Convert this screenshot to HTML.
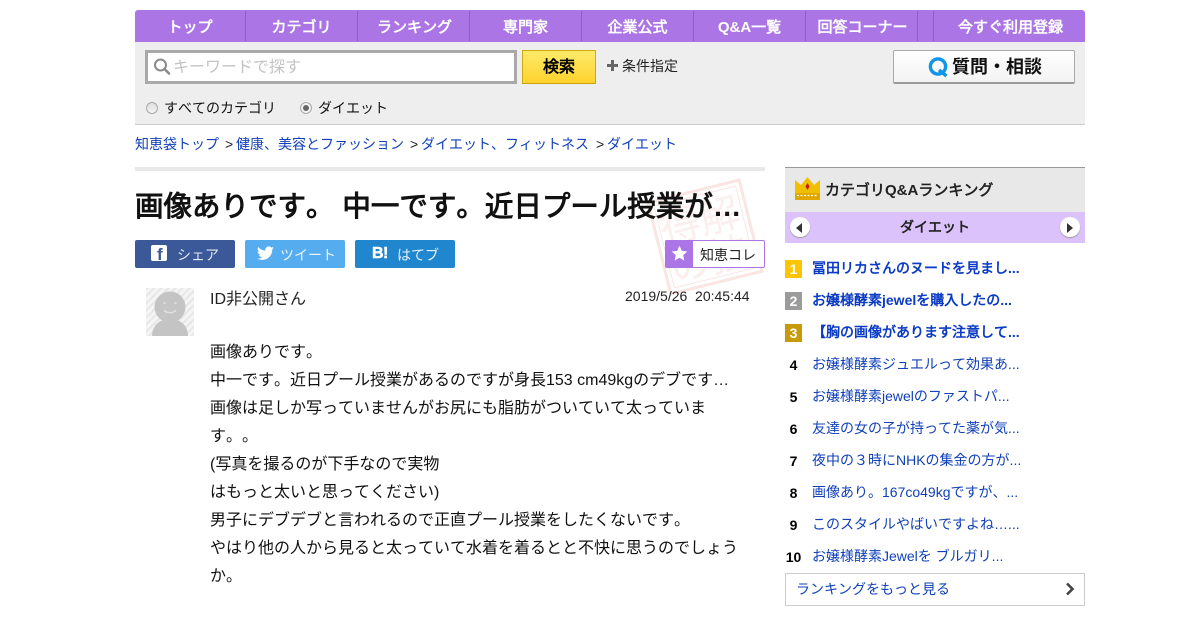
<!DOCTYPE html>
<html lang="ja"><head><meta charset="utf-8"><title>画像ありです</title>
<style>
html,body{margin:0;padding:0;background:#fff;}
body{width:1200px;height:630px;overflow:hidden;position:relative;font-family:"Liberation Sans","WenQuanYi Zen Hei",sans-serif;color:#111;text-spacing-trim:space-all;font-kerning:none;}
.a{position:absolute;white-space:nowrap;}
.nav{left:135px;top:10px;width:950px;height:32px;background:#ab75e5;border-radius:3px 3px 0 0;}
.nt{top:11px;height:32px;line-height:34px;text-align:center;color:#fff;font-weight:bold;font-size:15px;}
.sep{top:11px;width:1px;height:30px;background:#8f5cc7;}
a,.l{color:#1140b8;text-decoration:none;}
.r{font-size:14px;line-height:20px;color:#1140b8;left:812px;}
.b{font-weight:bold;color:#0b3bc4;}
.n{left:785px;width:17px;text-align:center;font-size:14px;font-weight:bold;line-height:20px;color:#000;}
.bd{left:785px;width:17px;height:18px;line-height:19px;text-align:center;color:#fff;font-size:14px;font-weight:bold;}
.p{left:210px;font-size:16px;line-height:28px;color:#111;}
.sh{top:240px;height:28px;border-radius:2px;color:#fff;font-size:14px;line-height:30px;}
</style></head><body>
<div class="a nav"></div>
<div class="a nt" style="left:135px;width:110px">トップ</div>
<div class="a nt" style="left:246px;width:111px">カテゴリ</div>
<div class="a nt" style="left:359px;width:111px">ランキング</div>
<div class="a nt" style="left:470px;width:111px">専門家</div>
<div class="a nt" style="left:582px;width:111px">企業公式</div>
<div class="a nt" style="left:694px;width:111px">Q&amp;A一覧</div>
<div class="a nt" style="left:807px;width:111px">回答コーナー</div>
<div class="a nt" style="left:935px;width:151px">今すぐ利用登録</div>
<div class="a sep" style="left:245px"></div><div class="a sep" style="left:357px"></div><div class="a sep" style="left:469px"></div><div class="a sep" style="left:581px"></div><div class="a sep" style="left:693px"></div><div class="a sep" style="left:805px"></div><div class="a sep" style="left:917px"></div><div class="a sep" style="left:933px"></div>

<div class="a" style="left:135px;top:42px;width:950px;height:82px;background:#eee;border-bottom:1px solid #ccc"></div>
<div class="a" style="left:145px;top:50px;width:366px;height:28px;background:#fff;border:3px solid #a9a9a9"></div>
<svg class="a" style="left:153px;top:58px" width="18" height="18" viewBox="0 0 18 18"><circle cx="7.500" cy="7" r="5.500" fill="none" stroke="#8a8a8a" stroke-width="2"/><path d="M11.500 11L16 15.500" stroke="#8a8a8a" stroke-width="2.600" stroke-linecap="round"/></svg>
<div class="a" style="left:173px;top:57px;font-size:16px;line-height:22px;color:#c4c4c4">キーワードで探す</div>
<div class="a" style="left:522px;top:50px;width:72px;height:32px;border:1px solid #d0a90f;border-bottom:1px solid #c9a20d;background:linear-gradient(#fdea6a,#fdd22e);text-align:center;line-height:33px;font-weight:bold;font-size:16px;color:#000">検索</div>
<div class="a" style="left:607px;top:64px;width:11px;height:3px;background:#666"></div>
<div class="a" style="left:611px;top:60px;width:3px;height:11px;background:#666"></div>
<div class="a" style="left:622px;top:56px;font-size:14px;line-height:20px;color:#222">条件指定</div>
<div class="a" style="left:893px;top:50px;width:180px;height:31px;border:1px solid #aaa;border-bottom:2px solid #999;border-radius:2px;background:linear-gradient(#fff,#f3f3f3)"></div>
<svg class="a" style="left:927px;top:56px" width="22" height="22" viewBox="0 0 22 22"><circle cx="11" cy="10.500" r="7.600" fill="none" stroke="#0e96e8" stroke-width="3.400"/><path d="M12 14l7.500 6" stroke="#0e96e8" stroke-width="3.400"/></svg>
<div class="a" style="left:952px;top:54px;font-size:18px;line-height:26px;font-weight:bold;color:#111;letter-spacing:0;font-family:'Liberation Sans','Noto Sans CJK JP',sans-serif">質問・相談</div>
<div class="a" style="left:146px;top:102px;width:10px;height:10px;border:1px solid #aaa;border-radius:50%;background:linear-gradient(#ddd,#f5f5f5)"></div>
<div class="a" style="left:164px;top:98px;font-size:14px;line-height:20px;color:#111">すべてのカテゴリ</div>
<div class="a" style="left:300px;top:102px;width:10px;height:10px;border:1px solid #aaa;border-radius:50%;background:#f2f2f2"></div>
<div class="a" style="left:303px;top:105px;width:6px;height:6px;border-radius:50%;background:#666"></div>
<div class="a" style="left:318px;top:98px;font-size:14px;line-height:20px;color:#111">ダイエット</div>

<div class="a" style="left:135px;top:134px;font-size:14px;line-height:20px;color:#111"><span class="l">知恵袋トップ</span></div>
<div class="a" style="left:225px;top:134px;font-size:14px;line-height:20px;color:#222">&gt;</div>
<div class="a l" style="left:236px;top:134px;font-size:14px;line-height:20px">健康、美容とファッション</div>
<div class="a" style="left:410px;top:134px;font-size:14px;line-height:20px;color:#222">&gt;</div>
<div class="a l" style="left:421px;top:134px;font-size:14px;line-height:20px">ダイエット、フィットネス</div>
<div class="a" style="left:596px;top:134px;font-size:14px;line-height:20px;color:#222">&gt;</div>
<div class="a l" style="left:607px;top:134px;font-size:14px;line-height:20px">ダイエット</div>

<div class="a" style="left:135px;top:167px;width:630px;height:4px;background:#e8e8e8"></div>
<svg class="a" style="left:640px;top:172px" width="130" height="130" viewBox="0 0 130 130"><g transform="rotate(-14 65 65)" fill="none" stroke="#f9e6e3"><rect x="18" y="18" width="94" height="94" stroke-width="3"/><rect x="23" y="23" width="84" height="84" stroke-width="1"/></g><g transform="rotate(-14 65 65)" fill="#fbefed" font-family="'WenQuanYi Zen Hei',sans-serif" font-size="40"><text x="24" y="62">得</text><text x="64" y="62">解</text><text x="24" y="102">の</text><text x="64" y="102">技</text></g></svg>
<div class="a" style="left:135px;top:188px;font-size:28.500px;line-height:38px;font-weight:bold;color:#111;letter-spacing:0">画像ありです。 中一です。近日プール授業が…</div>

<div class="a sh" style="left:135px;width:100px;background:#3b5998"></div>
<div class="a" style="left:151px;top:245px;width:16px;height:16px;background:#fff;border-radius:2px"></div>
<div class="a" style="left:157px;top:245px;font-size:17px;line-height:19px;font-weight:bold;color:#3b5998">f</div>
<div class="a" style="left:177px;top:245px;font-size:14px;line-height:20px;color:#dfe5f2">シェア</div>
<div class="a sh" style="left:245px;width:100px;background:#55acee"></div>
<svg class="a" style="left:257px;top:246px" width="17" height="15" viewBox="0 0 24 20"><path fill="#fff" d="M24 2.400c-.9.400-1.800.700-2.800.800 1-.6 1.800-1.600 2.200-2.700-1 .6-2 1-3.100 1.200C19.300.700 18 0 16.600 0c-2.700 0-4.900 2.200-4.900 4.900 0 .4 0 .8.100 1.100C7.700 5.800 4.100 3.900 1.700.9c-.4.700-.7 1.600-.7 2.500 0 1.700.9 3.200 2.200 4.100-.8 0-1.600-.2-2.200-.6v.1c0 2.400 1.700 4.400 3.900 4.800-.4.100-.8.200-1.300.2-.3 0-.6 0-.9-.1.600 2 2.400 3.400 4.600 3.400-1.700 1.300-3.800 2.100-6.100 2.100-.4 0-.8 0-1.200-.1C2.200 18.300 4.800 19 7.500 19c9.100 0 14-7.500 14-14v-.6c1-.7 1.800-1.500 2.500-2z"/></svg>
<div class="a" style="left:280px;top:245px;font-size:14px;line-height:20px;color:#e8f4fd">ツイート</div>
<div class="a sh" style="left:355px;width:100px;background:#2086cd"></div>
<div class="a" style="left:372px;top:244px;font-size:16px;line-height:20px;font-weight:bold;color:#fff;letter-spacing:-.5px;-webkit-text-stroke:.5px #fff">B!</div>
<div class="a" style="left:397px;top:245px;font-size:14px;line-height:20px;color:#e4f1fa">はてブ</div>

<div class="a" style="left:665px;top:240px;width:98px;height:26px;border:1px solid #ab75e5;border-radius:2px;background:#fff"></div>
<div class="a" style="left:665px;top:240px;width:28px;height:28px;background:#ab75e5;border-radius:2px 0 0 2px"></div>
<svg class="a" style="left:671px;top:245px" width="17" height="17" viewBox="0 0 24 24"><path fill="#fff" d="M12 1l3.300 7.300 7.700.8-5.800 5.200 1.700 7.700L12 18l-6.900 4 1.700-7.700L1 9.100l7.700-.8z"/></svg>
<div class="a" style="left:700px;top:245px;font-size:14px;line-height:20px;color:#222">知恵コレ</div>

<svg class="a" style="left:146px;top:288px" width="48" height="48" viewBox="0 0 48 48"><defs><pattern id="h" width="5" height="5" patternUnits="userSpaceOnUse" patternTransform="rotate(-45)"><rect width="5" height="5" fill="#f5f5f5"/><rect width="5" height="2" fill="#e6e6e6"/></pattern></defs><rect width="48" height="48" fill="url(#h)"/><circle cx="24" cy="19" r="15.500" fill="#c4c4c4"/><path d="M6 48c0-10 7-17 18-17s18 7 18 17z" fill="#c4c4c4"/><path d="M18 22c2 3.500 10 3.500 12 0" fill="none" stroke="#e0e0e0" stroke-width="1.500"/><circle cx="18.500" cy="15" r="1.200" fill="#dcdcdc"/><circle cx="29.500" cy="15" r="1.200" fill="#dcdcdc"/></svg>
<div class="a" style="left:210px;top:288px;font-size:16px;line-height:24px;color:#222">ID非公開さん</div>
<div class="a" style="left:625px;top:286px;font-size:14px;line-height:20px;color:#222;white-space:pre">2019/5/26  20:45:44</div>

<div class="a p" style="top:339px">画像ありです。</div>
<div class="a p" style="top:367px">中一です。近日プール授業があるのですが身長153 cm49kgのデブです…</div>
<div class="a p" style="top:395px">画像は足しか写っていませんがお尻にも脂肪がついていて太っていま</div>
<div class="a p" style="top:423px">す。。</div>
<div class="a p" style="top:451px">(写真を撮るのが下手なので実物</div>
<div class="a p" style="top:479px">はもっと太いと思ってください)</div>
<div class="a p" style="top:507px">男子にデブデブと言われるので正直プール授業をしたくないです。</div>
<div class="a p" style="top:535px">やはり他の人から見ると太っていて水着を着るとと不快に思うのでしょう</div>
<div class="a p" style="top:563px">か。</div>

<div class="a" style="left:785px;top:167px;width:300px;height:44px;background:#e8e8e8;border-top:1px solid #999"></div>
<svg class="a" style="left:795px;top:176px" width="25" height="25" viewBox="0 0 25 25"><path d="M0 4l6 5 6.500-8 6.500 8 6-5v14H0z" fill="#f0c000"/><rect y="17" width="25" height="7" fill="#e0a800"/><path d="M2 19.500h21" stroke="#fff" stroke-width="1.200" stroke-dasharray="2 1.500"/><path d="M12.500 7l2 3.500-2 3.500-2-3.500z" fill="#c8161d"/></svg>
<div class="a" style="left:825px;top:180px;font-size:15px;line-height:22px;font-weight:bold;color:#222">カテゴリQ&amp;Aランキング</div>
<div class="a" style="left:785px;top:212px;width:300px;height:31px;background:#dcc2fa"></div>
<div class="a" style="left:785px;top:212px;width:300px;height:31px;line-height:31px;text-align:center;font-size:14px;font-weight:bold;color:#222">ダイエット</div>
<div class="a" style="left:790px;top:217px;width:20px;height:20px;border-radius:50%;background:#fff;box-shadow:0 1px 1px #999"></div>
<div class="a" style="left:796px;top:223px;width:0;height:0;border:5px solid transparent;border-left:0;border-right:6px solid #333"></div>
<div class="a" style="left:1060px;top:217px;width:20px;height:20px;border-radius:50%;background:#fff;box-shadow:0 1px 1px #999"></div>
<div class="a" style="left:1067px;top:223px;width:0;height:0;border:5px solid transparent;border-right:0;border-left:6px solid #333"></div>

<div class="a bd" style="top:260px;background:#fdc500">1</div><div class="a r b" style="top:258px">冨田リカさんのヌードを見まし...</div>
<div class="a bd" style="top:292px;background:#9b9b9b">2</div><div class="a r b" style="top:290px">お嬢様酵素jewelを購入したの...</div>
<div class="a bd" style="top:324px;background:#c79a08">3</div><div class="a r b" style="top:322px">【胸の画像があります注意して...</div>
<div class="a n" style="top:355px">4</div><div class="a r" style="top:354px">お嬢様酵素ジュエルって効果あ...</div>
<div class="a n" style="top:387px">5</div><div class="a r" style="top:386px">お嬢様酵素jewelのファストパ...</div>
<div class="a n" style="top:419px">6</div><div class="a r" style="top:418px">友達の女の子が持ってた薬が気...</div>
<div class="a n" style="top:451px">7</div><div class="a r" style="top:450px">夜中の３時にNHKの集金の方が...</div>
<div class="a n" style="top:483px">8</div><div class="a r" style="top:482px">画像あり。167co49kgですが、...</div>
<div class="a n" style="top:515px">9</div><div class="a r" style="top:514px">このスタイルやばいですよね…...</div>
<div class="a n" style="top:547px">10</div><div class="a r" style="top:546px">お嬢様酵素Jewelを ブルガリ...</div>
<div class="a" style="left:785px;top:573px;width:298px;height:31px;border:1px solid #ccc"></div>
<div class="a l" style="left:796px;top:579px;font-size:14px;line-height:20px">ランキングをもっと見る</div>
<svg class="a" style="left:1064px;top:582px" width="12" height="14" viewBox="0 0 12 14"><path d="M3 1.500L8.500 7 3 12.500" fill="none" stroke="#444" stroke-width="2.600"/></svg>
</body></html>
